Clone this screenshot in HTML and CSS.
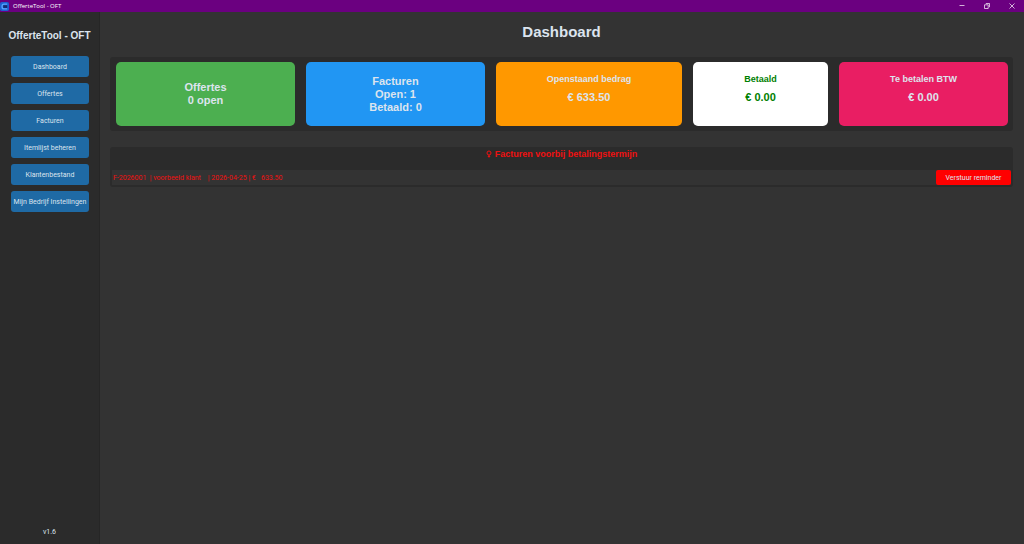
FILE: index.html
```
<!DOCTYPE html>
<html lang="nl">
  <head>
    <meta charset="UTF-8" />
    <meta name="viewport" content="width=device-width, initial-scale=1.0" />
    <title>OfferteTool - OFT</title>
    <link rel="stylesheet" href="styles.css">
  </head>

  <body>
    <header class="titlebar">
      <svg class="app-icon" viewBox="0 0 10 10">
        <rect width="10" height="10" rx="2" fill="#1d5fd0" />
        <path d="M8 2.3H4.5Q2.3 2.3 2.3 4.5V5.5Q2.3 7.7 4.5 7.7H8" fill="none" stroke="#5aa4ff" stroke-width="1.4" />
        <rect x="3.6" y="3.6" width="4.4" height="3" fill="#14286e" />
      </svg>
      <span class="window-title">OfferteTool - OFT</span>
      <div class="window-controls">
        <button type="button" aria-label="Minimaliseren">
          <svg viewBox="0 0 6 6"><path d="M0.5 2.5H5.5" /></svg>
        </button>
        <button type="button" aria-label="Herstellen">
          <svg viewBox="0 0 6 6"><path d="M0.5 1.8H4.2V5.5H0.5ZM1.8 0.5H5.5V4.2" /></svg>
        </button>
        <button type="button" aria-label="Sluiten">
          <svg viewBox="0 0 6 6"><path d="M0.5 0.5L5.5 5.5M5.5 0.5L0.5 5.5" /></svg>
        </button>
      </div>
    </header>

    <div class="app">
      <aside class="sidebar">
        <h2>OfferteTool - OFT</h2>
        <nav class="menu">
          <button type="button">Dashboard</button>
          <button type="button">Offertes</button>
          <button type="button">Facturen</button>
          <button type="button">Itemlijst beheren</button>
          <button type="button">Klantenbestand</button>
          <button type="button">Mijn Bedrijf Instellingen</button>
        </nav>
        <p class="version">v1.6</p>
      </aside>

      <main class="content">
        <h1>Dashboard</h1>

        <section class="cards">
          <div class="card green">
            <p>Offertes<br />0 open</p>
          </div>
          <div class="card blue">
            <p>Facturen<br />Open: 1<br />Betaald: 0</p>
          </div>
          <div class="card amount orange">
            <h3>Openstaand bedrag</h3>
            <p>€ 633.50</p>
          </div>
          <div class="card amount white">
            <h3>Betaald</h3>
            <p>€ 0.00</p>
          </div>
          <div class="card amount pink">
            <h3>Te betalen BTW</h3>
            <p>€ 0.00</p>
          </div>
        </section>

        <section class="overdue">
          <h3>
            <svg class="pin" viewBox="0 0 6 8">
              <circle cx="3" cy="3" r="2" />
              <path d="M3 5V7.6M1.8 6.4H4.2" />
            </svg>
            Facturen voorbij betalingstermijn
          </h3>
          <div class="overdue-row">
            <span class="invoice">F-2026001  | voorbeeld klant    | 2026-04-25 | €   633.50</span>
            <button type="button">Verstuur reminder</button>
          </div>
        </section>
      </main>
    </div>
  </body>
</html>
```
FILE: styles.css
```
* {
  box-sizing: border-box;
}

body {
  margin: 0;
  min-height: 100vh;
  display: flex;
  flex-direction: column;
  background-color: #333333;
  color: #dce4ee;
  font-family: Roboto, sans-serif;
  font-size: 7px;
}

h1,
h2,
h3,
p {
  margin: 0;
}

h1,
h2,
h3,
.card {
  font-family: "Liberation Sans", Arial, sans-serif;
  font-weight: bold;
}

button {
  border: none;
  padding: 0;
  font-family: inherit;
  font-size: 7px;
  color: #dce4ee;
  cursor: pointer;
}

/* window title bar */
.titlebar {
  display: flex;
  align-items: center;
  height: 12px;
  background-color: #6b0080;
  color: white;
}

.app-icon {
  width: 9px;
  height: 9px;
  margin-right: 4px;
}

.window-title {
  font-family: "Open Sans", sans-serif;
  font-size: 6px;
}

.window-controls {
  display: flex;
  margin-left: auto;
}

.window-controls button {
  display: flex;
  align-items: center;
  justify-content: center;
  width: 25px;
  height: 12px;
  background: none;
}

.window-controls svg {
  width: 6px;
  height: 6px;
  fill: none;
  stroke: white;
  stroke-width: 0.7;
}

.app {
  flex: 1;
  display: flex;
}

/* sidebar */
.sidebar {
  display: flex;
  flex-direction: column;
  flex: 0 0 100px;
  padding: 16px 0 6px;
  background-color: #2b2b2b;
  border-right: 1px solid #262626;
  text-align: center;
}

.sidebar h2 {
  font-size: 10px;
  line-height: 16px;
  white-space: nowrap;
}

.menu {
  display: flex;
  flex-direction: column;
  gap: 6px;
  padding: 12px 10px 0 11px;
}

.menu button {
  height: 21px;
  border-radius: 3px;
  background-color: #1f6aa5;
  white-space: nowrap;
}

.version {
  margin-top: auto;
  line-height: 12px;
}

/* dashboard */
.content {
  flex: 1;
  padding: 10px 11px 10px 10px;
}

h1 {
  font-size: 15px;
  line-height: 20px;
  text-align: center;
}

.cards {
  display: grid;
  grid-template-columns: 179fr 179fr 186fr 135fr 169fr;
  gap: 11px;
  margin-top: 15px;
  padding: 5px 5px 5px 6px;
  border-radius: 3px;
  background-color: #2b2b2b;
}

.card {
  display: flex;
  flex-direction: column;
  align-items: center;
  justify-content: center;
  min-height: 64px;
  border-radius: 5px;
  font-size: 11px;
  line-height: 13px;
  text-align: center;
}

.card h3 {
  font-size: 9px;
  line-height: 12px;
}

.amount {
  justify-content: flex-start;
  gap: 6px;
  padding-top: 11px;
}

.green {
  background-color: #4caf50;
}

.blue {
  background-color: #2196f3;
}

.orange {
  background-color: #ff9800;
}

.white {
  background-color: white;
  color: green;
}

.pink {
  background-color: #e91e63;
}

/* overdue invoices */
.overdue {
  margin-top: 16px;
  padding-bottom: 2px;
  border-radius: 3px;
  background-color: #2b2b2b;
  color: #f01010;
}

.overdue h3 {
  display: flex;
  align-items: center;
  justify-content: center;
  gap: 3px;
  height: 23px;
  padding-bottom: 9px;
  font-size: 9px;
}

.pin {
  width: 6px;
  height: 8px;
  fill: none;
  stroke: #f01010;
}

.overdue-row {
  display: flex;
  align-items: center;
  justify-content: space-between;
  margin: 0 2px;
  background-color: #333333;
}

.invoice {
  padding-left: 1px;
  white-space: pre;
}

.overdue-row button {
  width: 75px;
  height: 15px;
  border-radius: 2px;
  background-color: red;
}
```
